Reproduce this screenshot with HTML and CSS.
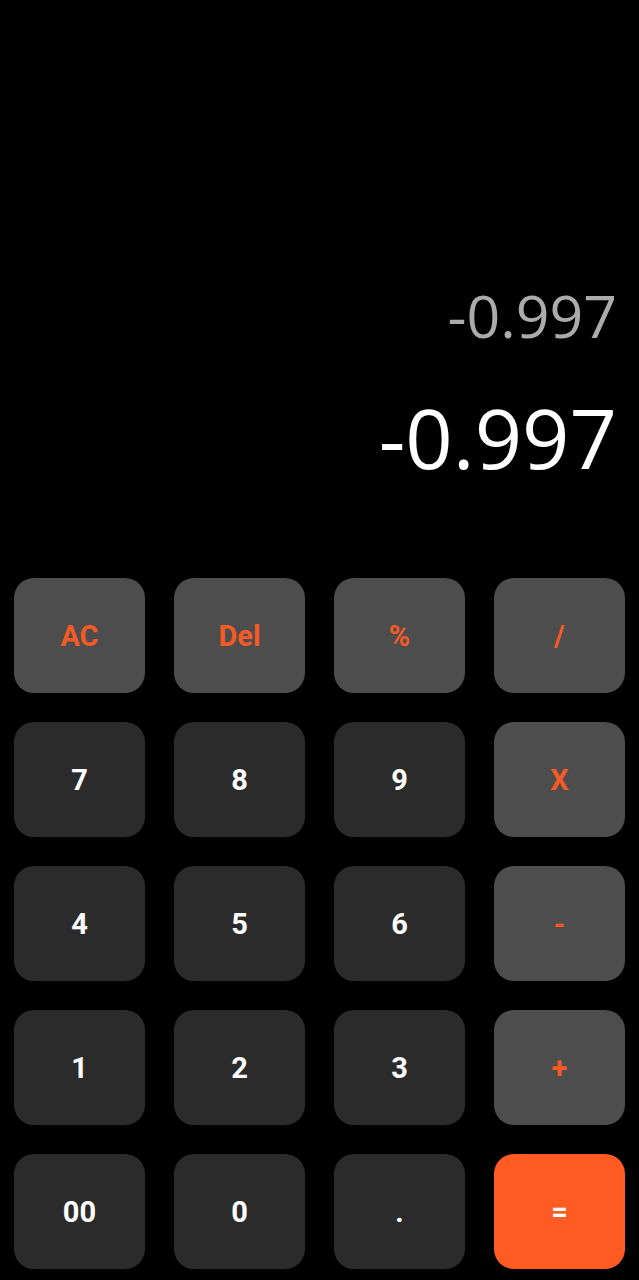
FILE: index.html
```html
<!DOCTYPE html>
<html>
<head>
<meta charset="utf-8">
<link rel="stylesheet" href="styles.css">
</head>
<body>
<div class="app">
  <div class="display">
    <div class="expr">-0.997</div>
    <div class="result">-0.997</div>
  </div>
  <div class="keys">
    <div class="key op">AC</div>
    <div class="key op">Del</div>
    <div class="key op">%</div>
    <div class="key op">/</div>
    <div class="key">7</div>
    <div class="key">8</div>
    <div class="key">9</div>
    <div class="key op">X</div>
    <div class="key">4</div>
    <div class="key">5</div>
    <div class="key">6</div>
    <div class="key op">-</div>
    <div class="key">1</div>
    <div class="key">2</div>
    <div class="key">3</div>
    <div class="key op">+</div>
    <div class="key">00</div>
    <div class="key">0</div>
    <div class="key">.</div>
    <div class="key eq">=</div>
  </div>
</div>
</body>
</html>
```
FILE: styles.css
```css
html, body {
  margin: 0;
  padding: 0;
  background: #000;
}
.app {
  width: 639px;
  height: 1280px;
  background: #000;
  overflow: hidden;
}
.display {
  padding: 285px 22px 98px 0;
  text-align: right;
  font-family: "Open Sans", sans-serif;
  font-weight: 400;
}
.expr {
  font-size: 59px;
  line-height: 60px;
  color: #ababab;
  margin-bottom: 48px;
}
.result {
  font-size: 83px;
  line-height: 87px;
  color: #ffffff;
}
.keys {
  display: grid;
  grid-template-columns: repeat(4, 131px);
  grid-auto-rows: 115px;
  column-gap: 29px;
  row-gap: 29px;
  padding: 0 14px;
}
.key {
  display: flex;
  align-items: center;
  justify-content: center;
  border-radius: 20px;
  background: #2b2b2b;
  color: #ffffff;
  font-family: Roboto, "Liberation Sans", sans-serif;
  font-weight: 700;
  font-size: 29px;
}
.key.op {
  background: #4d4d4d;
  color: #f35a26;
}
.key.eq {
  background: #ff5b22;
  color: #ffffff;
}
```
